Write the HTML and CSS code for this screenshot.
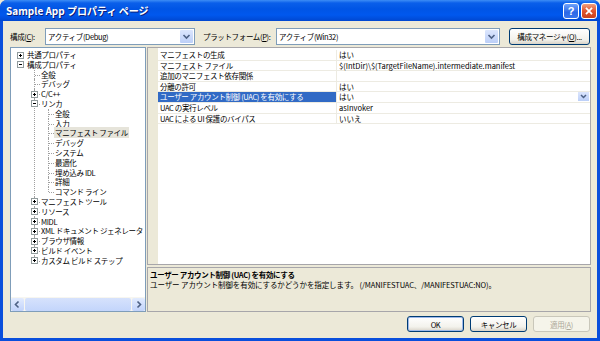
FILE: index.html
```html
<!DOCTYPE html>
<html>
<head>
  <title>Sample App プロパティ ページ</title>
  <link rel="stylesheet" href="styles.css">
</head>
<body>
  <div class="window">
    <div class="titlebar">
      <span class="title">Sample App プロパティ ページ</span>
      <div class="caption-buttons">
        <span class="cap help">?</span>
        <span class="cap close">
          <svg width="16" height="16" viewBox="0 0 16 16"><path d="M4.5 4.5 L11.5 11.5 M11.5 4.5 L4.5 11.5" stroke="#fff" stroke-width="2" fill="none"/></svg>
        </span>
      </div>
    </div>
    <div class="client">
      <div class="toolbar">
        <span class="label label-config">構成(<u>C</u>):</span>
        <div class="combo combo-config">
          <span class="combo-text">アクティブ(Debug)</span>
          <span class="drop"><svg width="13" height="15" viewBox="0 0 13 15"><path d="M3.5 6 L6.5 9 L9.5 6" stroke="#4D6185" stroke-width="1.6" fill="none"/></svg></span>
        </div>
        <span class="label label-platform">プラットフォーム(<u>P</u>):</span>
        <div class="combo combo-platform">
          <span class="combo-text">アクティブ(Win32)</span>
          <span class="drop"><svg width="13" height="15" viewBox="0 0 13 15"><path d="M3.5 6 L6.5 9 L9.5 6" stroke="#4D6185" stroke-width="1.6" fill="none"/></svg></span>
        </div>
        <button class="btn btn-manager">構成マネージャ(<u>O</u>)...</button>
      </div>

      <div class="main">
        <div class="tree-panel">
          <ul class="tree">
            <li><div class="node"><span class="exp plus"></span>共通プロパティ</div></li>
            <li><div class="node"><span class="exp"></span>構成プロパティ</div>
              <ul>
                <li><div class="node">全般</div></li>
                <li><div class="node">デバッグ</div></li>
                <li><div class="node"><span class="exp plus"></span>C/C++</div></li>
                <li><div class="node"><span class="exp"></span>リンカ</div>
                  <ul>
                    <li><div class="node">全般</div></li>
                    <li><div class="node">入力</div></li>
                    <li><div class="node"><span class="selected">マニフェスト ファイル</span></div></li>
                    <li><div class="node">デバッグ</div></li>
                    <li><div class="node">システム</div></li>
                    <li><div class="node">最適化</div></li>
                    <li><div class="node">埋め込み IDL</div></li>
                    <li><div class="node">詳細</div></li>
                    <li><div class="node">コマンド ライン</div></li>
                  </ul>
                </li>
                <li><div class="node"><span class="exp plus"></span>マニフェスト ツール</div></li>
                <li><div class="node"><span class="exp plus"></span>リソース</div></li>
                <li><div class="node"><span class="exp plus"></span>MIDL</div></li>
                <li><div class="node"><span class="exp plus"></span>XML ドキュメント ジェネレータ</div></li>
                <li><div class="node"><span class="exp plus"></span>ブラウザ情報</div></li>
                <li><div class="node"><span class="exp plus"></span>ビルド イベント</div></li>
                <li><div class="node"><span class="exp plus"></span>カスタム ビルド ステップ</div></li>
              </ul>
            </li>
          </ul>
          <div class="hscroll">
            <span class="sb-btn"><svg width="13" height="13" viewBox="0 0 13 13"><path d="M7.5 3.5 L4.5 6.5 L7.5 9.5" stroke="#4D6185" stroke-width="1.6" fill="none"/></svg></span>
            <span class="sb-thumb"></span>
            <span class="sb-btn"><svg width="13" height="13" viewBox="0 0 13 13"><path d="M5.5 3.5 L8.5 6.5 L5.5 9.5" stroke="#4D6185" stroke-width="1.6" fill="none"/></svg></span>
          </div>
        </div>

        <div class="right">
          <div class="grid">
            <div class="gutter"></div>
            <div class="rows">
              <div class="row"><span class="name">マニフェストの生成</span><span class="value">はい</span></div>
              <div class="row"><span class="name">マニフェスト ファイル</span><span class="value">$(IntDir)\$(TargetFileName).intermediate.manifest</span></div>
              <div class="row"><span class="name">追加のマニフェスト依存関係</span><span class="value"></span></div>
              <div class="row"><span class="name">分離の許可</span><span class="value">はい</span></div>
              <div class="row active"><span class="name">ユーザー アカウント制御 (UAC) を有効にする</span><span class="value">はい<span class="cell-drop"><svg width="11" height="9" viewBox="0 0 11 9"><path d="M3 3 L5.5 5.5 L8 3" stroke="#4D6185" stroke-width="1.5" fill="none"/></svg></span></span></div>
              <div class="row"><span class="name">UAC の実行レベル</span><span class="value">asInvoker</span></div>
              <div class="row"><span class="name">UAC による UI 保護のバイパス</span><span class="value">いいえ</span></div>
            </div>
          </div>
          <div class="desc">
            <div class="desc-title">ユーザー アカウント制御 (UAC) を有効にする</div>
            <div class="desc-text">ユーザー アカウント制御を有効にするかどうかを指定します。 (/MANIFESTUAC、/MANIFESTUAC:NO)。</div>
          </div>
        </div>
      </div>

      <div class="footer">
        <button class="btn btn-default">OK</button>
        <button class="btn">キャンセル</button>
        <button class="btn btn-disabled">適用(<u>A</u>)</button>
      </div>
    </div>
  </div>
</body>
</html>
```

FILE: styles.css
```css
body {
  margin: 0;
  font-family: "Noto Sans CJK JP", "Liberation Sans", sans-serif;
  font-size: 7.5px;
  letter-spacing: -0.35px;
  color: #000000;
  background: #ECE9D8;
}
.window {
  width: 600px;
  height: 341px;
  box-sizing: border-box;
  display: flex;
  flex-direction: column;
  background: #0A4FDC;
  border-radius: 7px 7px 0 0;
  overflow: hidden;
}
.titlebar {
  height: 21px;
  flex: none;
  display: flex;
  align-items: center;
  justify-content: space-between;
  padding: 0 3px 0 6px;
  background: linear-gradient(to bottom, #3D8DF5 0, #0A5FEA 3px, #0055E5 9px, #0058EE 15px, #0047D0 21px);
}
.title {
  color: #FFFFFF;
  font-weight: bold;
  font-size: 10px;
  letter-spacing: 0;
  text-shadow: 1px 1px 0 #0A1E78;
}
.caption-buttons {
  display: flex;
  gap: 2px;
}
.cap {
  width: 16px;
  height: 16px;
  box-sizing: border-box;
  border: 1px solid #FFFFFF;
  border-radius: 3px;
  display: flex;
  align-items: center;
  justify-content: center;
  color: #FFFFFF;
  font-weight: bold;
  font-family: "Liberation Sans", sans-serif;
  font-size: 11px;
  letter-spacing: 0;
}
.cap.help {
  background: linear-gradient(to bottom, #6FA2FB, #2C68E6 60%, #3A76EE);
}
.cap.close {
  background: linear-gradient(to bottom, #F0A080, #E0542E 50%, #C8421E);
}
.cap.close svg {
  width: 14px;
  height: 14px;
}
.client {
  flex: 1;
  margin: 0 3px 3px;
  background: #ECE9D8;
  padding: 7px 6px 0 7px;
  display: flex;
  flex-direction: column;
}
.toolbar {
  display: flex;
  align-items: center;
  height: 17px;
}
.label {
  white-space: nowrap;
  flex: none;
}
.label-config { width: 35px; }
.label-platform { width: 73px; margin-left: 8px; }
.combo {
  height: 17px;
  box-sizing: border-box;
  border: 1px solid #7F9DB9;
  background: #FFFFFF;
  display: flex;
  align-items: center;
  flex: none;
}
.combo-config { width: 150px; }
.combo-platform { width: 224px; }
.combo-text {
  flex: 1;
  padding-left: 2px;
  white-space: nowrap;
}
.drop {
  width: 13px;
  height: 13px;
  margin-right: 1px;
  border-radius: 1px;
  background: linear-gradient(to bottom, #DCE6FD, #BCCFF8);
  display: flex;
  align-items: center;
  justify-content: center;
  overflow: hidden;
}
.btn {
  font-family: inherit;
  font-size: 7.5px;
  letter-spacing: -0.35px;
  height: 16px;
  box-sizing: border-box;
  padding: 0;
  border: 1px solid #003C74;
  border-radius: 3px;
  background: linear-gradient(to bottom, #FFFFFF, #F3F2EC 70%, #D8D3C8);
  color: #000000;
  white-space: nowrap;
}
.btn-manager {
  width: 81px;
  height: 17px;
  margin-left: 9px;
}
.main {
  display: flex;
  gap: 1px;
  height: 265px;
  margin-top: 2px;
}
.tree-panel {
  width: 136px;
  box-sizing: border-box;
  border: 1px solid #7F9DB9;
  background: #FFFFFF;
  display: flex;
  flex-direction: column;
  justify-content: space-between;
}
.tree {
  list-style: none;
  margin: 0;
  padding: 2px 0 0 0;
}
.tree ul {
  list-style: none;
  margin: 0;
  padding-left: 14px;
}
.tree li {
  position: relative;
}
.tree ul > li::before {
  content: '';
  position: absolute;
  left: 9px;
  top: 0;
  bottom: 0;
  border-left: 1px dotted #A0A0A0;
}
.tree ul > li:last-child::before {
  bottom: auto;
  height: 5px;
}
.tree ul > li::after {
  content: '';
  position: absolute;
  left: 10px;
  top: 5px;
  width: 5px;
  border-top: 1px dotted #A0A0A0;
}
.node {
  position: relative;
  height: 9.8px;
  line-height: 9.8px;
  padding-left: 16px;
  white-space: nowrap;
}
.exp {
  position: absolute;
  z-index: 1;
  left: 6px;
  top: 1.5px;
  width: 7px;
  height: 7px;
  box-sizing: border-box;
  border: 1px solid #919B9C;
  background: #FFFFFF;
}
.exp::before {
  content: '';
  position: absolute;
  left: 1px;
  top: 2px;
  width: 3px;
  height: 1px;
  background: #000000;
}
.exp.plus::after {
  content: '';
  position: absolute;
  left: 2px;
  top: 1px;
  width: 1px;
  height: 3px;
  background: #000000;
}
.selected {
  background: #E6E4DA;
  padding: 0 1px;
  margin-left: -1px;
}
.hscroll {
  height: 14px;
  display: flex;
  gap: 1px;
  background: #F7F6F0;
  flex: none;
}
.sb-btn {
  width: 13px;
  height: 13px;
  margin-top: 1px;
  border-radius: 2px;
  background: linear-gradient(to bottom, #E2EBFE, #C1D3FB);
  display: flex;
}
.sb-thumb {
  flex: 1;
  margin-top: 1px;
  height: 13px;
  border-radius: 2px;
  background: linear-gradient(to bottom, #D6E2FC, #C3D5FB);
}
.right {
  flex: 1;
  display: flex;
  flex-direction: column;
  gap: 2px;
}
.grid {
  height: 218px;
  box-sizing: border-box;
  border: 1px solid #A7A6AA;
  background: #FFFFFF;
  display: flex;
}
.gutter {
  width: 10px;
  background: #ECE9D8;
}
.rows {
  flex: 1;
  padding-top: 2px;
}
.row {
  display: flex;
  height: 10.6px;
  line-height: 9.6px;
  box-sizing: border-box;
  border-bottom: 1px solid #EDEBE2;
}
.name {
  width: 179px;
  padding-left: 2px;
  box-sizing: border-box;
  border-right: 1px solid #EDEBE2;
  white-space: nowrap;
}
.value {
  flex: 1;
  padding-left: 2px;
  white-space: nowrap;
  display: flex;
  justify-content: space-between;
  letter-spacing: 0;
}
.row.active .name {
  background: #316AC5;
  color: #FFFFFF;
}
.cell-drop {
  width: 11px;
  height: 9px;
  margin-right: 1px;
  background: linear-gradient(to bottom, #DCE6FD, #BCCFF8);
  display: flex;
}
.desc {
  flex: 1;
  box-sizing: border-box;
  border: 1px solid #A7A6AA;
  padding: 2px 2px 0 2px;
  line-height: 10px;
}
.desc-title {
  font-weight: bold;
}
.desc-text {
  letter-spacing: -0.1px;
}
.footer {
  display: flex;
  justify-content: flex-end;
  gap: 6px;
  margin-top: 4px;
  padding-right: 1px;
}
.footer .btn {
  width: 57px;
}
.btn-default {
  box-shadow: inset 0 0 0 1px #9DB9EB;
}
.btn-disabled {
  border-color: #C9C7BA;
  background: #F5F4EA;
  color: #ACA899;
}
```
